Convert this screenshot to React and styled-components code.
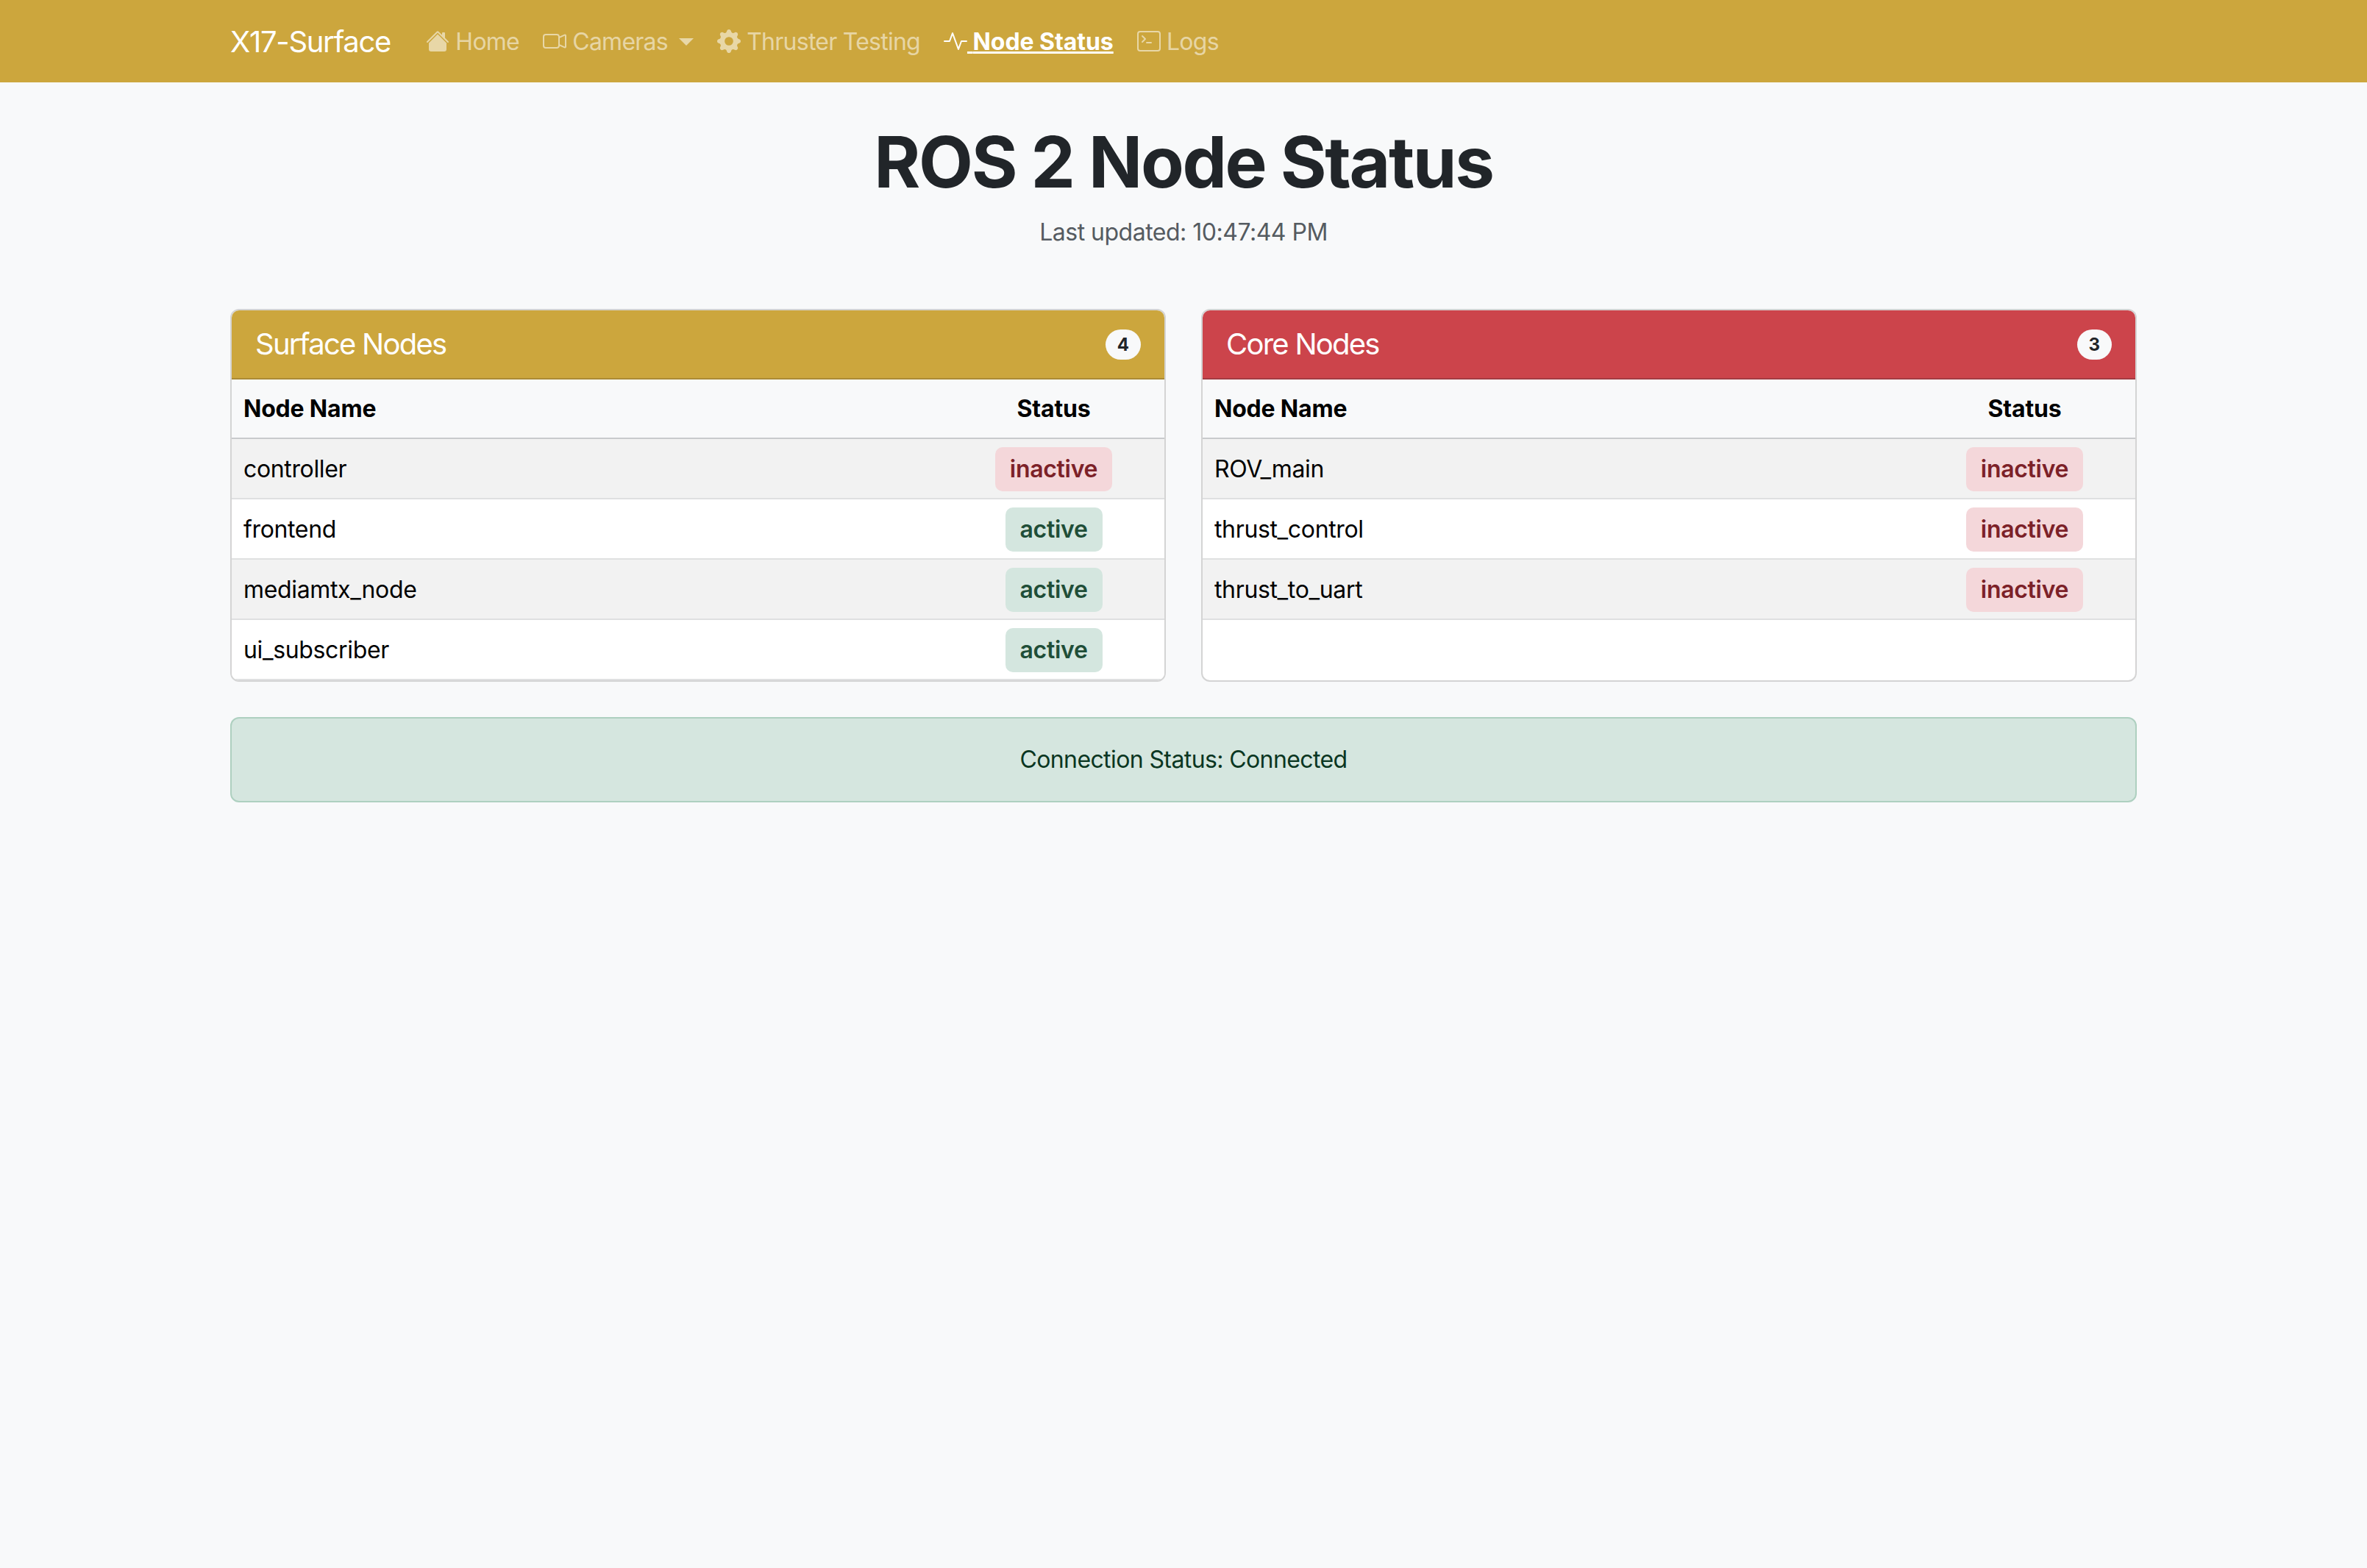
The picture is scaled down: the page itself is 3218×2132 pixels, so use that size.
import React from 'react';
import styled, { createGlobalStyle } from 'styled-components';
import { BsHouseFill, BsCameraVideo, BsGearFill, BsActivity, BsTerminal } from 'react-icons/bs';

const GOLD = '#cca63d';
const RED = '#cc444b';

const surfaceNodes = [
    { name: 'controller', status: 'inactive' },
    { name: 'frontend', status: 'active' },
    { name: 'mediamtx_node', status: 'active' },
    { name: 'ui_subscriber', status: 'active' },
];

const coreNodes = [
    { name: 'ROV_main', status: 'inactive' },
    { name: 'thrust_control', status: 'inactive' },
    { name: 'thrust_to_uart', status: 'inactive' },
];

const navItems = [
    { label: 'Home', icon: BsHouseFill },
    { label: 'Cameras', icon: BsCameraVideo, dropdown: true },
    { label: 'Thruster Testing', icon: BsGearFill },
    { label: 'Node Status', icon: BsActivity, active: true },
    { label: 'Logs', icon: BsTerminal },
];

const GlobalStyle = createGlobalStyle`
    * { box-sizing: border-box; }
    html, body { margin: 0; padding: 0; }
    body {
        min-height: 2132px;
        background: #f8f9fa;
        color: #212529;
        font-family: Inter, "Liberation Sans", sans-serif;
        font-size: 32px;
        line-height: 48px;
        letter-spacing: -0.35px;
    }
`;

const Navbar = styled.nav`
    height: 112px;
    background: ${GOLD};
    padding: 2px 313px 0;
    display: flex;
    align-items: center;
`;

const Brand = styled.a`
    color: #fff;
    font-size: 40px;
    line-height: 60px;
    letter-spacing: -1.3px;
    margin-right: 32px;
    white-space: nowrap;
`;

const NavLink = styled.a`
    padding: 0 16px;
    white-space: nowrap;
    color: ${(p) => (p.$active ? '#fff' : 'rgba(255, 255, 255, 0.55)')};
    font-weight: ${(p) => (p.$active ? 700 : 400)};
    letter-spacing: ${(p) => (p.$active ? '-0.05px' : '-0.75px')};
    text-decoration: ${(p) => (p.$active ? 'underline' : 'none')};
    svg { vertical-align: -4px; }
`;

const Caret = styled.span`
    display: inline-block;
    margin-left: 15px;
    vertical-align: 6px;
    border-top: 10px solid currentColor;
    border-left: 10px solid transparent;
    border-right: 10px solid transparent;
`;

const Main = styled.main`
    padding: 0 313px;
`;

const PageHeader = styled.header`
    text-align: center;
    padding-top: 50px;
    margin-bottom: 80px;
`;

const Title = styled.h1`
    margin: 0 0 14px;
    font-size: 96px;
    line-height: 116px;
    font-weight: 700;
    letter-spacing: -2.35px;
`;

const Updated = styled.p`
    margin: 0;
    color: #555b61;
    letter-spacing: -0.5px;
`;

const CardGrid = styled.div`
    display: grid;
    grid-template-columns: 1fr 1fr;
    gap: 48px;
    margin-bottom: 48px;
`;

const Card = styled.section`
    background: #fff;
    border: 2px solid rgba(0, 0, 0, 0.17);
    border-radius: 12px;
    overflow: hidden;
`;

const CardHeader = styled.div`
    height: 94px;
    padding: 0 32px;
    display: flex;
    align-items: center;
    justify-content: space-between;
    background: ${(p) => p.$color};
    border-bottom: 2px solid ${(p) => p.$border};
    color: #fff;
    font-size: 40px;
    letter-spacing: -1.75px;
`;

const Count = styled.span`
    background: #f8f9fa;
    color: #212529;
    border-radius: 100px;
    padding: 0 16px;
    height: 41px;
    font-size: 24px;
    line-height: 41px;
    font-weight: 700;
    letter-spacing: 0;
`;

const Table = styled.table`
    width: 100%;
    border-collapse: collapse;
    color: #000;
`;

const HeadCell = styled.th`
    height: 80px;
    padding: 0 16px;
    background: #f8f9fa;
    border-bottom: 2px solid #c8cacc;
    font-weight: 700;
    letter-spacing: -0.2px;
    text-align: ${(p) => (p.$center ? 'center' : 'left')};
    width: ${(p) => (p.$center ? '301px' : 'auto')};
`;

const Row = styled.tr`
    background: ${(p) => (p.$striped ? '#f2f2f2' : '#fff')};
`;

const Cell = styled.td`
    height: 82px;
    padding: 1px 16px 0;
    border-bottom: 2px solid #dfe0e1;
    text-align: ${(p) => (p.$center ? 'center' : 'left')};
`;

const StatusBadge = styled.span`
    display: inline-block;
    padding: 6px 20px;
    border-radius: 10px;
    font-weight: 600;
    letter-spacing: -0.3px;
    background: ${(p) => (p.$status === 'active' ? '#d4e6df' : '#f4d7da')};
    color: ${(p) => (p.$status === 'active' ? '#1f4e38' : '#7c2128')};
    vertical-align: middle;
`;

const Alert = styled.div`
    height: 116px;
    display: flex;
    align-items: center;
    justify-content: center;
    background: #d5e6df;
    border: 2px solid #aed0c0;
    border-radius: 12px;
    color: #0a3622;
    letter-spacing: -0.6px;
`;

function NodeCard({ title, color, border, nodes }) {
    return (
        <Card>
            <CardHeader $color={color} $border={border}>
                {title}
                <Count>{nodes.length}</Count>
            </CardHeader>
            <Table>
                <thead>
                    <tr>
                        <HeadCell>Node Name</HeadCell>
                        <HeadCell $center>Status</HeadCell>
                    </tr>
                </thead>
                <tbody>
                    {nodes.map((node, i) => (
                        <Row key={node.name} $striped={i % 2 === 0}>
                            <Cell>{node.name}</Cell>
                            <Cell $center>
                                <StatusBadge $status={node.status}>{node.status}</StatusBadge>
                            </Cell>
                        </Row>
                    ))}
                </tbody>
            </Table>
        </Card>
    );
}

function App() {
    return (
        <>
            <GlobalStyle />
            <Navbar>
                <Brand>X17-Surface</Brand>
                {navItems.map(({ label, icon: Icon, active, dropdown }) => (
                    <NavLink key={label} $active={active}>
                        <Icon size={32} /> {label}
                        {dropdown && <Caret />}
                    </NavLink>
                ))}
            </Navbar>
            <Main>
                <PageHeader>
                    <Title>ROS 2 Node Status</Title>
                    <Updated>Last updated: 10:47:44 PM</Updated>
                </PageHeader>
                <CardGrid>
                    <NodeCard title="Surface Nodes" color={GOLD} border="#ab8b35" nodes={surfaceNodes} />
                    <NodeCard title="Core Nodes" color={RED} border="#a33c43" nodes={coreNodes} />
                </CardGrid>
                <Alert>Connection Status: Connected</Alert>
            </Main>
        </>
    );
}

export default App;
